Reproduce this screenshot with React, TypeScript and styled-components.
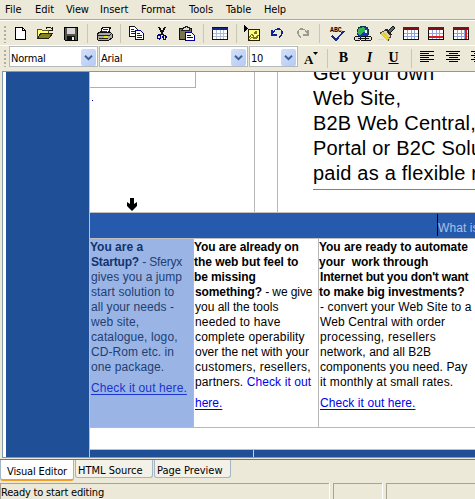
import React from "react";
import styled, { createGlobalStyle } from "styled-components";

const Global = createGlobalStyle`
  * { box-sizing: border-box; }
  body { margin: 0; overflow: hidden; background: #ece9d8; }
`;
const ui = `"DejaVu Sans Condensed", "DejaVu Sans", sans-serif`;
const arial = `"Liberation Sans", Arial, sans-serif`;

const Window = styled.div`
  width: 475px; height: 499px; overflow: hidden; background: #ece9d8; color: #000;
  display: flex; flex-direction: column; font: 11px ${ui};
`;
const MenuBar = styled.nav`
  height: 20px; flex: none; display: flex; border-bottom: 1px solid #aca899; line-height: 20px;
`;
const MenuItem = styled.span<{ $gap: number; $w: number; $ls?: number }>`
  margin-left: ${p => p.$gap}px; width: ${p => p.$w}px; white-space: nowrap; letter-spacing: ${p => p.$ls ?? 0}px;
`;
const ToolRow = styled.div<{ $h: number }>`
  height: ${p => p.$h}px; flex: none; display: flex; overflow: hidden; border-top: 1px solid #fffefa;
`;
const Grip = styled.i<{ $top: number }>`
  width: 2px; height: 17px; margin: ${p => p.$top}px 0 0 4px; flex: none;
  background: repeating-linear-gradient(#b0ad9f 0 2px, transparent 2px 4px);
`;
const Tool = styled.span<{ $gap: number; $w: number; $top?: number }>`
  flex: none; display: block; margin-left: ${p => p.$gap}px; margin-top: ${p => p.$top ?? 5}px; width: ${p => p.$w}px;
  svg { display: block; overflow: visible; }
`;
const Sep = styled.i<{ $gap: number }>`
  flex: none; width: 1px; height: 19px; margin: 3px 0 0 ${p => p.$gap}px; background: #c9c6b3;
`;
const Select = styled.div<{ $gap: number; $w: number }>`
  flex: none; display: flex; justify-content: space-between; margin-left: ${p => p.$gap}px; width: ${p => p.$w}px; height: 21px;
  background: #fff; border: 1px solid #b5b8bd; padding: 1px 0 0 1px; line-height: 21px; letter-spacing: -.2px;
`;
const Arrow = styled.span`
  width: 15px; height: 17px; margin: 1px 1px 0 0; border-radius: 2px; background: linear-gradient(135deg, #d3e0fb, #b4cbf3);
  display: grid; place-items: center;
`;
const Letter = styled.span<{ $gap: number; $w: number; $kind?: string }>`
  flex: none; margin-left: ${p => p.$gap}px; width: ${p => p.$w}px; font: bold 14px/24px "Liberation Serif", serif; text-align: center;
  font-style: ${p => (p.$kind === "i" ? "italic" : "normal")};
  text-decoration: ${p => (p.$kind === "u" ? "underline" : "none")};
`;

const Editor = styled.main`
  height: 387px; flex: none; margin-left: 2px; border: 1px solid #8399af; border-right: 0; background: #fff;
  display: flex; padding-left: 3px; overflow: hidden; font-family: ${arial};
`;
const SidePanel = styled.aside`width: 84px; flex: none; background: #1f5097; border-right: 1px solid #c0c0c0;`;
const Page = styled.div`width: 385px; flex: none; display: flex; flex-direction: column;`;
const Hero = styled.section`height: 140px; display: flex; flex: none; overflow: hidden;`;
const HeroLeft = styled.div`width: 165px; display: flex; flex-direction: column; border-right: 1px solid #b8b8b8;`;
const Box = styled.div`width: 106px; height: 16px; flex: none; border: solid #b0b0b0; border-width: 0 1px 1px 0;`;
const Dot = styled.i`width: 1px; height: 1px; margin: 12px 0 0 2px; background: #0000b0;`;
const ArrowDown = styled.svg`margin: auto 0 0 36px; display: block;`;
const Gutter = styled.div`width: 23px; border-right: 1px solid #b8b8b8;`;
const Pitch = styled.div`margin: -11px 0 0 35px; width: 162px; height: 129px; border-bottom: 1px solid #808080; overflow: hidden;`;
const PitchLine = styled.div<{ $ls: number }>`
  font-size: 20px; line-height: 25px; height: 25px; white-space: pre; letter-spacing: ${p => p.$ls}px;
`;
const Band = styled.div`
  height: 27px; flex: none; border: solid #c0c0c0; border-width: 1px 0; background: #265aad; display: flex; padding: 1px 0 0 347px;
`;
const Caret = styled.i`width: 1px; height: 22px; flex: none; background: #000;`;
const BandText = styled.span`color: #a9c0e6; font-size: 12px; line-height: 28px; letter-spacing: .1px; white-space: nowrap;`;
const Columns = styled.section`height: 189px; flex: none; display: flex; border-bottom: 1px solid #b8b8b8;`;
const Column = styled.article<{ $w: number; $selected?: boolean }>`
  width: ${p => p.$w}px; flex: none; overflow: hidden; border-right: 1px solid #b8b8b8; padding-top: 1px;
  &:last-child { border-right: 0; }
  background: ${p => (p.$selected ? "#9ab4e5" : "#fff")}; color: ${p => (p.$selected ? "#213f73" : "#000")};
  b { color: ${p => (p.$selected ? "#12336f" : "#000")}; }
  a { color: ${p => (p.$selected ? "#1834d2" : "#0000ee")}; }
`;
const Line = styled.div<{ $ls?: number; $indent?: number; $top?: number }>`
  height: 15px; font-size: 12px; line-height: 15px; white-space: pre; letter-spacing: ${p => p.$ls ?? 0}px;
  padding-left: ${p => p.$indent ?? 1}px; margin-top: ${p => p.$top ?? 0}px;
`;
const Bold = styled.b``;
const Link = styled.a<{ $plain?: boolean }>`
  text-decoration: ${p => (p.$plain ? "none" : "underline")}; text-underline-offset: 2px; text-decoration-skip-ink: none;
`;
const Spacer = styled.div`height: 21px; flex: none;`;
const Footer = styled.div`height: 9px; flex: none; display: flex; background: #1f5097; border-top: 1px solid #c0c0c0; padding-left: 163px;`;
const FooterRule = styled.i`width: 1px; height: 9px; background: #d0d0d0;`;

const Tabs = styled.div`height: 24px; flex: none; display: flex; margin-top: 1px; border-top: 1px solid #77766a; font-size: 11px;`;
const Tab = styled.div<{ $w: number; $gap?: number; $active?: boolean; $ls?: number }>`
  width: ${p => p.$w}px; margin-left: ${p => p.$gap ?? 0}px; height: ${p => (p.$active ? 21 : 18)}px; flex: none;
  background: ${p => (p.$active ? "#fff" : "#f3f1e8")}; border: 1px solid #a3b6c2; border-top: 0;
  border-bottom: ${p => (p.$active ? "2px solid #f0a129" : "1px solid #a3b6c2")}; border-radius: 0 0 3px 3px;
  padding-left: ${p => (p.$active ? 6 : 2)}px; line-height: ${p => (p.$active ? 24 : 21)}px; white-space: nowrap; letter-spacing: ${p => p.$ls ?? 0}px;
`;
const Status = styled.footer`height: 17px; flex: none; display: flex;`;
const Cell = styled.div<{ $w: number; $gap?: number }>`
  width: ${p => p.$w}px; margin-left: ${p => p.$gap ?? 0}px; flex: none; border: solid #a7a490; border-width: 1px 0 0 1px;
  box-shadow: 1px 0 #fff; line-height: 18px; white-space: nowrap; letter-spacing: -.2px;
`;

const Chevron = () => <Arrow><svg width="9" height="6" viewBox="0 0 9 6"><path d="M1 .8 4.5 4.2 8 .8" fill="none" stroke="#405f91" strokeWidth="2" /></svg></Arrow>;
const Svg = ({ w, h = 17, children }: { w: number; h?: number; children: React.ReactNode }) => (
  <svg width={w} height={h} viewBox={`0 0 ${w} ${h}`} shapeRendering="crispEdges">{children}</svg>
);
const NewIcon = () => <Svg w={12}><path d="M.5 1.5h7l3 3v9H.5z" fill="#fff" stroke="#000" /><path d="M7.5 1.5v3h3" fill="none" stroke="#000" /></Svg>;
const OpenIcon = () => <Svg w={17}><path d="M.5 12.5v-9h4l1 1h6v3" fill="#ffff70" stroke="#555520" /><path d="m1 12 3-5h12l-4 5z" fill="#858020" stroke="#222210" /><path d="M9 2.5 10 1h3l2 2m0-2v3h-3" fill="none" stroke="#111" /></Svg>;
const SaveIcon = () => <Svg w={14}><path d="M.5 1.5h13v13h-12l-1-1z" fill="#555849" stroke="#000" /><path d="M3 2h8v6H3z" fill="#d6d6d6" /><path d="M3 10h8v4H3z" fill="#111" /><path d="M8 11h2v3H8z" fill="#eee" /></Svg>;
const PrintIcon = () => <Svg w={17}><path d="m4.500 7 2-6h8l-2 6z" fill="#fff" stroke="#111" /><path d="M7 3.500h5M6 5.500h5" stroke="#333" /><path d="m1 8 3-2h10l2 2v4l-3 2H2l-1-2z" fill="#aaa" stroke="#111" /><path d="M1 9.500h12l3-2M3 12.500h9" fill="none" stroke="#222" /><path d="M8 11h4" stroke="#eee600" strokeWidth="2" /></Svg>;
const CopyIcon = () => <Svg w={16}><path d="M.5.5h5l3 3v7h-8z" fill="#fff" stroke="#111" /><path d="M2 3.500h3M2 5.500h5M2 7.500h5" stroke="#222" /><path d="M6.500 4.500h5l3 3v6h-8z" fill="#fff" stroke="#00008c" /><path d="M8 7.500h3M8 9.500h5M8 11.500h5" stroke="#222" /></Svg>;
const CutIcon = () => <Svg w={10}><path d="m2 1 4 8M8 1 4 9" stroke="#111" strokeWidth="1.400" /><g fill="none" stroke="#000098" strokeWidth="1.300"><ellipse cx="2.200" cy="11" rx="1.500" ry="2" /><ellipse cx="7.500" cy="11.500" rx="1.500" ry="2" /></g></Svg>;
const PasteIcon = () => <Svg w={17}><path d="M.5 2.500h12v11H.5z" fill="#77754f" stroke="#111" /><path d="M4 3V1.500h2V.5h2v1h2V4H3z" fill="#ddd" stroke="#222" /><path d="M6.500 6.500h6l3 3v5h-9z" fill="#fff" stroke="#000090" /><path d="M8 9.500h4M8 11.500h6" stroke="#000090" /></Svg>;
const TableIcon = ({ mark = "" }: { mark?: string }) => <Svg w={16}>
  <path d="M.5 1.500h15v12H.5z" fill="#fff" stroke="#111" />
  <path d="M1 7.500h14M1 10.500h14M4.500 4v9M8.500 4v9M11.500 4v9" stroke={mark ? "#8fa4d8" : "#aebbd5"} />
  <path d="M0 1h16v3H0z" fill={mark ? "#7d1015" : "#14288c"} />{!mark && <path d="M0 1h16" stroke="#111" />}
  {mark === "row" && <path d="M1 10h14v2H1z" fill="#e11920" />}{mark === "col" && <path d="M12 4h2v9h-2z" fill="#e11920" />}
</Svg>;
const ImageIcon = () => <Svg w={17}><path d="m0 0 4 3.500L0 7z" fill="#000" /><path d="M4.500 4.500h11v11h-11z" fill="#ffff87" stroke="#222200" /><path d="m5 13 3-4 3 4 4-3M5 15l3-3 3 2 3-2" fill="none" stroke="#75751c" /><path d="M11 6h2v3h-3V7z" fill="#747815" /></Svg>;
const UndoIcon = ({ redo = false }: { redo?: boolean }) => <Svg w={13}><g transform={redo ? "translate(13 0) scale(-1 1)" : undefined} fill="none" stroke={redo ? "#999b91" : "#0b209a"} strokeWidth="1.300"><path d="M1 4v5h5M1 8l3-4 2-1h3l2 2v3l-2 3H8" /></g></Svg>;
const SpellText = styled.text`font: bold 6.5px "Liberation Mono", monospace;`;
const SpellIcon = () => <Svg w={16}><SpellText x="0" y="6">ABC</SpellText><path d="m2 10 4 4 8-9" fill="none" stroke="#15298d" strokeWidth="1.800" /></Svg>;
const GlobeIcon = () => <Svg w={18}><circle cx="9" cy="6" r="6" fill="#1735bd" stroke="#163246" /><path d="M5 2 10 1l2 4-4 2-2 3-3-3z" fill="#35b750" /><path d="M11 4h2v3h-2z" fill="#e5f7ff" /><g fill="#ddd" stroke="#111"><rect x=".5" y="10.500" width="6" height="4" rx="2" /><rect x="6.500" y="10.500" width="6" height="4" rx="2" /><rect x="11.500" y="10.500" width="6" height="4" rx="2" /></g><path d="M4 12.500h11" stroke="#111" /></Svg>;
const BrushIcon = () => <Svg w={18}><path d="m10 5 5-5 2 2-5 5" fill="#567" stroke="#111" /><path d="m2 7 6-3 5 6-3 5z" fill="#ddd7a6" stroke="#444" /><path d="m3 8 7 6M5 7l7 6" stroke="#e3cf20" strokeWidth="1.500" /><path d="m8 3 5 6" stroke="#222" strokeWidth="2" /><path d="m0 14 6-1" stroke="#ecdd74" /></Svg>;
const AlignIcon = ({ center = false }: { center?: boolean }) => <Svg w={14}><path d={center ? "M0 1.500h14M3 3.500h9M0 5.500h14M3 7.500h9M0 9.500h14M3 11.500h9" : "M0 1.500h14M0 3.500h9M0 5.500h14M0 7.500h9M0 9.500h14M0 11.500h9"} stroke="#000" /></Svg>;

export default function App() {
  return <Window>
    <Global />
    <MenuBar>
      <MenuItem $gap={5} $w={30}>File</MenuItem><MenuItem $gap={0} $w={31}>Edit</MenuItem><MenuItem $gap={0} $w={34} $ls={-0.2}>View</MenuItem>
      <MenuItem $gap={0} $w={41}>Insert</MenuItem><MenuItem $gap={0} $w={48} $ls={-0.1}>Format</MenuItem><MenuItem $gap={0} $w={37}>Tools</MenuItem>
      <MenuItem $gap={0} $w={38}>Table</MenuItem><MenuItem $gap={0} $w={30} $ls={-0.2}>Help</MenuItem>
    </MenuBar>
    <ToolRow $h={25}>
      <Grip $top={5} />
      <Tool $gap={9} $w={12}><NewIcon /></Tool><Tool $gap={10} $w={17}><OpenIcon /></Tool><Tool $gap={10} $w={14}><SaveIcon /></Tool>
      <Sep $gap={9} /><Tool $gap={8} $w={17}><PrintIcon /></Tool><Sep $gap={7} />
      <Tool $gap={8} $w={16}><CopyIcon /></Tool><Tool $gap={12} $w={10}><CutIcon /></Tool><Tool $gap={12} $w={17}><PasteIcon /></Tool>
      <Sep $gap={7} /><Tool $gap={8} $w={16}><TableIcon /></Tool><Sep $gap={8} />
      <Tool $gap={7} $w={17} $top={4}><ImageIcon /></Tool><Tool $gap={10} $w={13}><UndoIcon /></Tool><Tool $gap={12} $w={13}><UndoIcon redo /></Tool>
      <Sep $gap={10} /><Tool $gap={10} $w={16}><SpellIcon /></Tool><Tool $gap={8} $w={18}><GlobeIcon /></Tool><Tool $gap={6} $w={18}><BrushIcon /></Tool>
      <Tool $gap={7} $w={16}><TableIcon mark="all" /></Tool><Tool $gap={9} $w={16}><TableIcon mark="row" /></Tool><Tool $gap={9} $w={16}><TableIcon mark="col" /></Tool>
    </ToolRow>
    <ToolRow $h={26}>
      <Grip $top={4} />
      <Select $gap={3} $w={89}>Normal<Chevron /></Select><Select $gap={1} $w={149}>Arial<Chevron /></Select><Select $gap={1} $w={49}>10<Chevron /></Select>
      <Tool $gap={6} $w={14}><svg width="14" height="16"><text x="0" y="13" fontFamily="Liberation Serif, serif" fontWeight="700" fontSize="13">A</text><path d="M9 1h5l-2.500 3z" /></svg></Tool>
      <Sep $gap={9} /><Letter $gap={9} $w={13}>B</Letter><Letter $gap={13} $w={13} $kind="i">I</Letter><Letter $gap={11} $w={13} $kind="u">U</Letter>
      <Sep $gap={11} /><Tool $gap={8} $w={14} $top={4}><AlignIcon /></Tool><Tool $gap={12} $w={14} $top={4}><AlignIcon center /></Tool><Tool $gap={11} $w={14} $top={4}><AlignIcon center /></Tool>
    </ToolRow>
    <Editor>
      <SidePanel />
      <Page>
        <Hero>
          <HeroLeft><Box /><Dot /><ArrowDown width="12" height="14" viewBox="0 0 12 14"><path d="M4 0h4v6l3-2v4l-5 5-5-5V4l3 2z" /></ArrowDown></HeroLeft>
          <Gutter />
          <Pitch>
            <PitchLine $ls={0.2}>Get your own</PitchLine><PitchLine $ls={0.2}>Web Site,</PitchLine><PitchLine $ls={0.2}>B2B Web Central,</PitchLine>
            <PitchLine $ls={0.2}>Portal or B2C Solutions</PitchLine><PitchLine $ls={0.2}>paid as a flexible rent</PitchLine>
          </Pitch>
        </Hero>
        <Band><Caret /><BandText>What is</BandText></Band>
        <Columns>
          <Column $w={104} $selected>
            <Line $indent={0}><Bold>You are a</Bold></Line><Line $ls={-0.17}><Bold>Startup?</Bold> - Sferyx</Line><Line $ls={0.06}>gives you a jump</Line><Line $ls={0.12}>start solution to</Line>
            <Line $ls={0.06}>all your needs -</Line><Line $ls={0.1}>web site,</Line><Line $ls={0.12}>catalogue, logo,</Line><Line $ls={0.07}>CD-Rom etc. in</Line><Line $ls={0.1}>one package.</Line>
            <Line $top={6} $ls={0.1}><Link>Check it out here.</Link></Line>
          </Column>
          <Column $w={125}>
            <Line $indent={0} $ls={-0.1}><Bold>You are already on</Bold></Line><Line $indent={0} $ls={-0.05}><Bold>the web but feel to</Bold></Line><Line $indent={0} $ls={-0.1}><Bold>be missing</Bold></Line>
            <Line $ls={-0.1}><Bold>something?</Bold> - we give</Line><Line>you all the tools</Line><Line $ls={0.2}>needed to have</Line><Line $ls={0.15}>complete operability</Line>
            <Line $ls={-0.04}>over the net with your</Line><Line $ls={0.24}>customers, resellers,</Line><Line $ls={0.1}>partners. <Link $plain>Check it out</Link></Line><Line $top={6}><Link>here.</Link></Line>
          </Column>
          <Column $w={156}>
            <Line $indent={0} $ls={-0.04}><Bold>You are ready to automate</Bold></Line><Line $indent={0}><Bold>your  work through</Bold></Line><Line $ls={-0.19}><Bold>Internet but you don't want</Bold></Line>
            <Line $indent={0} $ls={-0.08}><Bold>to make big investments?</Bold></Line><Line $ls={0.11}>- convert your Web Site to a</Line><Line $ls={0.12}>Web Central with order</Line><Line $ls={0.28}>processing, resellers</Line>
            <Line $ls={0.05}>network, and all B2B</Line><Line $ls={0.08}>components you need. Pay</Line><Line $ls={0.15}>it monthly at small rates.</Line><Line $top={6} $ls={0.08}><Link>Check it out here.</Link></Line>
          </Column>
        </Columns>
        <Spacer /><Footer><FooterRule /></Footer>
      </Page>
    </Editor>
    <Tabs><Tab $w={74} $active $ls={-0.15}>Visual Editor</Tab><Tab $w={78} $gap={1}>HTML Source</Tab><Tab $w={77} $gap={1}>Page Preview</Tab></Tabs>
    <Status><Cell $w={329}>Ready to start editing</Cell><Cell $w={49} $gap={4}></Cell><Cell $w={90} $gap={4}></Cell></Status>
  </Window>;
}
